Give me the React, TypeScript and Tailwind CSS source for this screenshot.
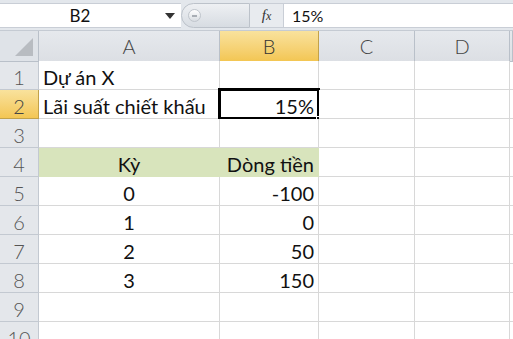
import { ReactNode } from "react";

const cols = ["A", "B", "C", "D", ""];

type Cell = { text?: string; align?: "left" | "center" | "right"; green?: boolean };

const rows: Cell[][] = [
  [{ text: "Dự án X" }, {}, {}, {}],
  [{ text: "Lãi suất chiết khấu" }, { text: "15%", align: "right" }, {}, {}],
  [{}, {}, {}, {}],
  [
    { text: "Kỳ", align: "center", green: true },
    { text: "Dòng tiền", align: "right", green: true },
    {},
    {},
  ],
  [{ text: "0", align: "center" }, { text: "-100", align: "right" }, {}, {}],
  [{ text: "1", align: "center" }, { text: "0", align: "right" }, {}, {}],
  [{ text: "2", align: "center" }, { text: "50", align: "right" }, {}, {}],
  [{ text: "3", align: "center" }, { text: "150", align: "right" }, {}, {}],
  [{}, {}, {}, {}],
  [{}, {}, {}, {}],
];

const gridCols = "grid grid-cols-[39px_181px_99px_96px_95px_1fr]";

function FormulaBar() {
  return (
    <div className="flex h-[31px] bg-[#e3e7ec] border-b border-[#c5cbd3]">
      <div className="relative mt-[3px] h-[25px] w-[181px] bg-white border-y border-[#c9ced6] flex items-center">
        <span className="w-[160px] text-center text-[17px] text-[#111]">B2</span>
        <svg className="absolute left-[165px] top-[9px]" width="10" height="6" viewBox="0 0 10 6">
          <path d="M0 0 L10 0 L5 6 Z" fill="#333" />
        </svg>
      </div>
      <div className="mt-[3px] h-[25px] w-[69px] rounded-l-full border border-[#bcc2ca] bg-gradient-to-b from-[#eef0f3] to-[#d7dce2] flex items-center pl-[6px]">
        <div className="w-[13px] h-[13px] rounded-full border border-[#c0c5cc] bg-gradient-to-b from-[#ffffff] to-[#d9dde2] flex items-center justify-center">
          <div className="w-[5px] h-[2px] bg-[#a9aeb5]" />
        </div>
      </div>
      <div className="mt-[3px] h-[25px] w-[33px] flex items-center justify-center border-y border-[#c9ced6] bg-[#e8ebef]">
        <span className="text-[15px] italic text-[#333] font-['Liberation_Serif',serif]">
          f<span className="text-[12px]">x</span>
        </span>
      </div>
      <div className="mt-[3px] h-[25px] flex-1 bg-white border-y border-l border-[#c9ced6] flex items-center pl-[8px] text-[16px] text-[#111]">
        15%
      </div>
    </div>
  );
}

function HeaderRow() {
  return (
    <div className={`${gridCols} h-[30px]`}>
      <div className="relative bg-[#dfe3e8] border-r border-b border-[#b9c0c9]">
        <svg className="absolute right-[5px] bottom-[5px]" width="18" height="18" viewBox="0 0 18 18">
          <path d="M18 0 L18 18 L0 18 Z" fill="#b8bcc1" />
        </svg>
      </div>
      {cols.map((c, i) =>
        c === "B" ? (
          <div
            key={i}
            className="flex items-center justify-center bg-gradient-to-b from-[#f9e29c] to-[#f3c653] border-r border-b border-[#c2a24a] text-[20px] font-light text-[#333]"
          >
            {c}
          </div>
        ) : (
          <div
            key={i}
            className="flex items-center justify-center bg-gradient-to-b from-[#e6e9ed] to-[#dcdfe4] border-r border-b border-[#b9c0c9] text-[20px] font-light text-[#444]"
          >
            {c}
          </div>
        )
      )}
    </div>
  );
}

function DataCell({ cell, children }: { cell: Cell; children?: ReactNode }) {
  const align =
    cell.align === "center" ? "justify-center" : cell.align === "right" ? "justify-end pr-[4px]" : "justify-start pl-[4px]";
  const bg = cell.green ? "bg-[#d8e4bc] border-[#d8e4bc]" : "bg-white border-[#d8d8d8]";
  return (
    <div className={`relative flex items-end pb-[2px] leading-none ${align} ${bg} border-r border-b text-[20px] text-[#111]`}>
      {cell.text}
      {children}
    </div>
  );
}

export default function App() {
  return (
    <div className="w-[513px] h-[339px] overflow-hidden bg-white font-['Lato',sans-serif]">
      <FormulaBar />
      <HeaderRow />
      {rows.map((r, ri) => (
        <div key={ri} className={`${gridCols} h-[29px]`}>
          <div
            className={
              ri === 1
                ? "flex items-end pb-[2px] leading-none justify-center bg-gradient-to-b from-[#f9e29c] to-[#f3c653] border-r border-b border-[#c2a24a] text-[20px] font-light text-[#444]"
                : "flex items-end pb-[2px] leading-none justify-center bg-[#e4e7eb] border-r border-b border-[#c3c9d1] text-[20px] font-light text-[#555]"
            }
          >
            {ri + 1}
          </div>
          {r.map((cell, ci) => (
            <DataCell key={ci} cell={cell}>
              {ri === 1 && ci === 1 && (
                <>
                  <div className="absolute left-[-2px] top-[-2px] right-[-2px] bottom-[-2px] border-[3px] border-black" />
                  <div className="absolute right-[-4px] bottom-[-4px] w-[6px] h-[6px] bg-black border border-white" />
                </>
              )}
            </DataCell>
          ))}
          <div className="border-b border-[#d8d8d8]" />
        </div>
      ))}
    </div>
  );
}
